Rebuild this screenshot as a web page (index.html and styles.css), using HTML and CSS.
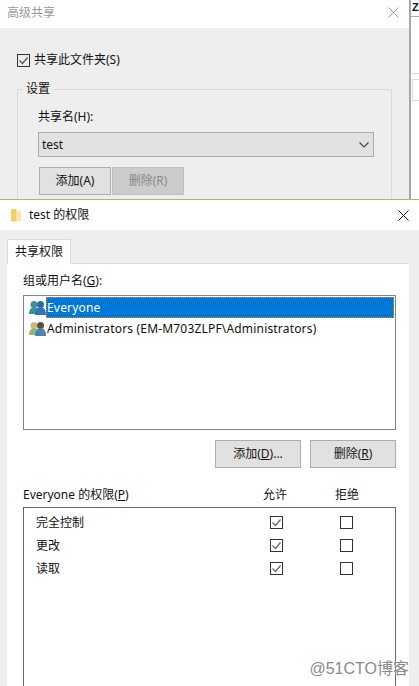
FILE: index.html
```html
<!DOCTYPE html>
<html lang="zh-CN">
<head>
<meta charset="utf-8">
<title>test 的权限</title>
<link rel="stylesheet" href="styles.css">
</head>
<body>
<div class="screen">
  <section class="back">
    <div class="back-dialog">
      <header class="back-title">
        <span>高级共享</span>
        <svg class="close" viewBox="0 0 11 11"><path d="M.5.5l10 10M10.500.5l-10 10" stroke="#9a9a9a" fill="none"/></svg>
      </header>
      <div class="back-body">
        <label class="share-check">
          <svg class="box box-dark" viewBox="0 0 13 13"><rect x=".5" y=".5" width="12" height="12" fill="none" stroke="#333"/><path d="M2.500 6.500l3 3 5-6" fill="none" stroke="#555" stroke-width="1.200"/></svg>
          <span>共享此文件夹(S)</span>
        </label>
        <fieldset class="group">
          <legend>设置</legend>
          <div class="field-label">共享名(H):</div>
          <div class="combo"><span>test</span><svg class="chev" viewBox="0 0 10 6"><path d="M.5.500l4.500 4.500 4.500-4.500" fill="none" stroke="#444" stroke-width="1.100"/></svg></div>
          <div class="back-buttons">
            <button class="btn small">添加(A)</button>
            <button class="btn small off">删除(R)</button>
          </div>
        </fieldset>
      </div>
    </div>
    <div class="splitter"></div>
    <div class="side-strip">
      <div class="side-top"><span class="z">Z</span></div>
      <div class="side-mid"></div>
      <div class="side-box"></div>
    </div>
  </section>

  <section class="front">
    <header class="front-title">
      <svg class="folder" viewBox="0 0 10 13"><path d="M0 0h5l1 1v11.500H0z" fill="#f3cf6c"/><path d="M5 1l5 1v9.500l-5 1.500z" fill="#fbe5a2"/></svg>
      <span class="front-name">test 的权限</span>
      <svg class="close" viewBox="0 0 11 11"><path d="M.5.5l10 10M10.500.5l-10 10" stroke="#111" fill="none"/></svg>
    </header>
    <div class="front-body">
      <div class="tab">共享权限</div>
      <div class="panel">
        <div class="users-label">组或用户名(<u>G</u>):</div>
        <div class="users">
          <div class="user">
            <svg class="people" viewBox="0 0 17 16"><circle cx="5" cy="4.500" r="3.500" fill="#3f8f96"/><path d="M0 14c0-4 2-7 5-7s5 3 5 7z" fill="#3f8f96"/><circle cx="11.500" cy="4.500" r="3.500" fill="#2f6a9e"/><path d="M6 15c0-5 2-8 5.500-8s5.500 3 5.500 8z" fill="#2f74b8"/></svg>
            <span class="user-name selected">Everyone</span>
          </div>
          <div class="user">
            <svg class="people" viewBox="0 0 17 16"><circle cx="5" cy="4.500" r="3.500" fill="#cfb67f"/><path d="M0 14c0-4 2-7 5-7s5 3 5 7z" fill="#94b870"/><circle cx="11.500" cy="4.500" r="3.500" fill="#5c4d40"/><path d="M6 15c0-5 2-8 5.500-8s5.500 3 5.500 8z" fill="#4f82b0"/></svg>
            <span class="user-name">Administrators (EM-M703ZLPF\Administrators)</span>
          </div>
        </div>
        <div class="user-buttons">
          <button class="btn wide">添加(<u>D</u>)...</button>
          <button class="btn wide">删除(<u>R</u>)</button>
        </div>
        <div class="perm-head">
          <span class="perm-title">Everyone 的权限(<u>P</u>)</span>
          <span class="col">允许</span>
          <span class="col">拒绝</span>
        </div>
        <div class="perms">
          <div class="perm"><span class="perm-name">完全控制</span><span class="cell"><svg class="box" viewBox="0 0 13 13"><rect x=".5" y=".5" width="12" height="12" fill="none" stroke="#333"/><path d="M2.500 6.500l3 3 5-6" fill="none" stroke="#666" stroke-width="1.200"/></svg></span><span class="cell"><svg class="box" viewBox="0 0 13 13"><rect x=".5" y=".5" width="12" height="12" fill="none" stroke="#333"/></svg></span></div>
          <div class="perm"><span class="perm-name">更改</span><span class="cell"><svg class="box" viewBox="0 0 13 13"><rect x=".5" y=".5" width="12" height="12" fill="none" stroke="#333"/><path d="M2.500 6.500l3 3 5-6" fill="none" stroke="#666" stroke-width="1.200"/></svg></span><span class="cell"><svg class="box" viewBox="0 0 13 13"><rect x=".5" y=".5" width="12" height="12" fill="none" stroke="#333"/></svg></span></div>
          <div class="perm"><span class="perm-name">读取</span><span class="cell"><svg class="box" viewBox="0 0 13 13"><rect x=".5" y=".5" width="12" height="12" fill="none" stroke="#333"/><path d="M2.500 6.500l3 3 5-6" fill="none" stroke="#666" stroke-width="1.200"/></svg></span><span class="cell"><svg class="box" viewBox="0 0 13 13"><rect x=".5" y=".5" width="12" height="12" fill="none" stroke="#333"/></svg></span></div>
        </div>
      </div>
    </div>
    <div class="watermark">@51CTO博客</div>
  </section>
</div>
</body>
</html>
```
FILE: styles.css
```css
* { box-sizing: border-box; }
html, body { margin: 0; height: 100%; overflow: hidden; background: #fff; }
body { font: 12px/16px "Noto Sans", "Noto Sans CJK SC", sans-serif; color: #111; }
.screen { width: 419px; height: 686px; position: relative; overflow: hidden; display: flex; flex-direction: column; }
svg { display: block; flex: none; }
u { text-underline-offset: 1px; }

.back { height: 199px; display: flex; flex: none; overflow: hidden; }
.back-dialog { width: 409px; flex: none; display: flex; flex-direction: column; }
.back-title { height: 28px; flex: none; display: flex; align-items: center; justify-content: space-between; padding: 0 10px 3px 7px; color: #999; background: #fff; }
.close { width: 11px; height: 11px; }
.back-body { flex: 1; background: #eee; padding: 25px 17px 0 17px; }
.share-check { display: flex; align-items: center; gap: 4px; height: 14px; }
.box { width: 13px; height: 13px; }
.group { margin: 15px 0 0; padding: 13px 17px 20px 20px; border: 1px solid #d9d9d9; height: 130px; min-width: 0; }
.group legend { padding: 0 3px; margin-left: -15px; line-height: 14px; }
.field-label { line-height: 16px; }
.combo { margin-top: 7px; height: 25px; border: 1px solid #adadad; background: #e1e1e1; display: flex; align-items: center; justify-content: space-between; padding: 0 4px 0 3px; }
.chev { width: 10px; height: 6px; }
.back-buttons { display: flex; gap: 1px; margin: 10px 0 0 1px; }
.btn { font: inherit; color: #111; background: #e1e1e1; border: 1px solid #adadad; padding: 0; }
.small { width: 72px; height: 28px; }
.off { background: #ccc; color: #888; border-color: #bfbfbf; }
.splitter { width: 2px; flex: none; background: #a8a8a8; }
.side-strip { flex: 1; min-width: 0; display: flex; flex-direction: column; }
.side-top { height: 17px; flex: none; border-bottom: 1px solid #a8a8a8; overflow: hidden; }
.z { display: block; font: bold 11px/14px "Liberation Sans", sans-serif; padding-left: 1px; }
.side-mid { height: 57px; flex: none; border-bottom: 1px solid #dcdcdc; }
.side-box { margin: 5px 0 0 1px; height: 22px; border: 1px solid #dcdcdc; border-right: 0; }

.front { flex: 1; min-height: 0; display: flex; flex-direction: column; border-top: 1px solid #c8a877; background: #eee; }
.front-title { height: 30px; flex: none; display: flex; align-items: center; background: #fff; padding: 0 10px 0 11px; }
.folder { width: 10px; height: 13px; margin-right: 8px; }
.front-name { flex: 1; font-size: 12px; }
.front-body { flex: 1; min-height: 0; padding: 9px 0 0 7px; display: flex; flex-direction: column; width: 409px; }
.tab { width: 64px; height: 25px; background: #fff; border: 1px solid #d9d9d9; border-bottom: 0; margin-bottom: -1px; position: relative; z-index: 1; text-align: center; line-height: 24px; }
.panel { flex: 1; min-height: 0; background: #fff; border-top: 1px solid #d9d9d9; padding: 9px 13px 0 16px; }
.users-label { line-height: 16px; }
.users { height: 135px; margin-top: 6px; border: 1px solid #828282; padding: 1px; }
.user { height: 21px; display: flex; align-items: center; padding-left: 4px; }
.people { width: 17px; height: 16px; }
.user-name { line-height: 22px; padding: 0 1px; white-space: nowrap; letter-spacing: .18px; }
.selected { flex: 1; background: #0078d7; color: #fff; outline: 1px dotted #e08a2e; outline-offset: -1px; height: 21px; }
.user-buttons { display: flex; justify-content: flex-end; gap: 9px; margin-top: 10px; }
.wide { width: 86px; height: 28px; }
.perm-head { display: flex; align-items: center; margin-top: 19px; height: 16px; }
.perm-title { width: 240px; }
.col { width: 24px; text-align: center; }
.col + .col { margin-left: 48px; }
.perms { height: 190px; margin-top: 4px; border: 1px solid #666; border-bottom: 0; padding: 3px 0 0 12px; }
.perm { height: 23px; display: flex; align-items: center; }
.perm-name { width: 234px; }
.cell { width: 13px; }
.cell + .cell { margin-left: 57px; }
.watermark { position: absolute; right: 10px; bottom: 9px; font: 16px/16px "Liberation Sans", "Noto Sans CJK SC", sans-serif; color: #8a8a8a; text-shadow: 0 0 2px #fff; }
```
